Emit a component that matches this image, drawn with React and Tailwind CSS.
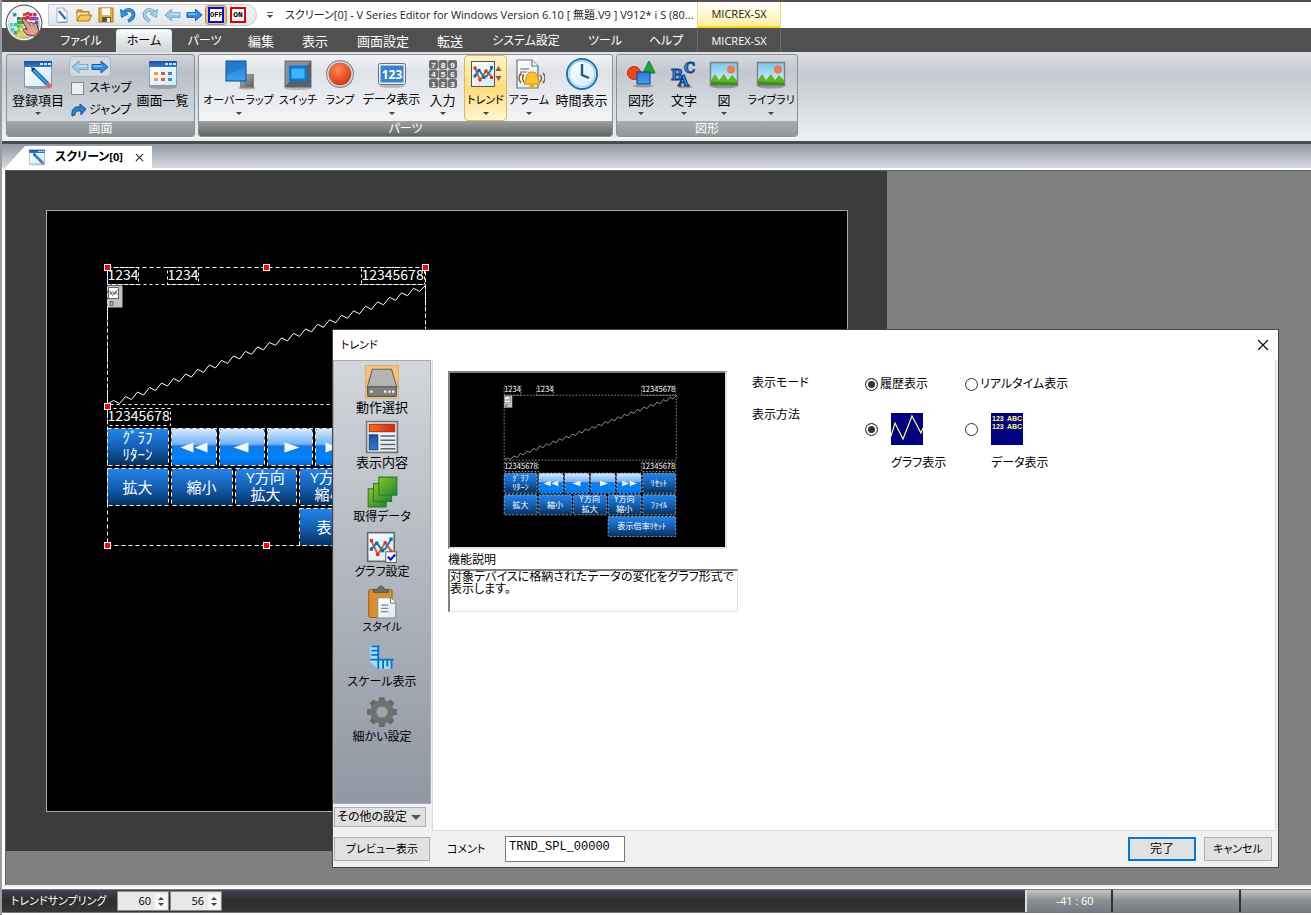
import React, { useState } from "react";

/* ---------- quick access icons ---------- */

const LogoIcon = () => (
  <svg viewBox="0 0 40 40" className="h-10 w-10">
    <defs>
      <radialGradient id="orb" cx="50%" cy="30%" r="75%">
        <stop offset="0" stopColor="#ffffff" />
        <stop offset="0.6" stopColor="#e8eaec" />
        <stop offset="1" stopColor="#9a9ea2" />
      </radialGradient>
    </defs>
    <circle cx="20" cy="20" r="18.5" fill="#5c5f63" />
    <circle cx="20" cy="20" r="17.3" fill="#fdfdfd" />
    <circle cx="20" cy="20" r="16" fill="url(#orb)" />
    {[
      [9, 10, "#2f98a8"], [13, 14, "#1c8c80"], [19, 10, "#e0503a"], [22, 9, "#d23c3c"], [25, 10, "#c83264"], [29, 10, "#a43c8c"],
      [16, 14, "#e87832"], [22, 13, "#c8325a"], [19, 14, "#d04030"], [28, 14, "#8c46be"], [31, 18, "#5a50c8"], [31, 14, "#a04cc0"], [25, 14, "#c83c80"],
      [6, 20, "#50d2dc"], [13, 18, "#28a84e"], [16, 18, "#50a03c"], [7, 25, "#48ccd4"], [13, 22, "#50c83c"], [16, 22, "#a0d232"],
      [10, 20, "#38c8a0"], [10, 28, "#46b432"], [13, 26, "#8cd228"], [13, 31, "#f0dc28"], [31, 22, "#6e46b4"], [18, 32, "#f0c828"], [16, 28, "#d8d828"],
    ].map(([x, y, c], i) => (
      <rect key={i} x={x} y={y} width="3.400" height="3.400" fill={c} />
    ))}
    <path d="M18 17c-.5-1.500 1.500-2.500 2.700-1.200l4 4.500c2-1.300 3.500-.9 4.500 0c2-.6 3.500.5 4 2.500c.8 2 .8 4 1.800 5.500l-4.500 5c-3-1.500-5.500-.5-8.500-2.500l-3-3.500c-.5-1.700 1.500-2.200 3-1l1.200.7z" fill="#d8a490" stroke="#5c2c24" strokeWidth="1" />
    <path d="M25 21l1.500 2.500M28.500 20.500l1.500 2.500" stroke="#8a4a3c" strokeWidth=".8" />
  </svg>
);

const Arrow = ({ left, faded, className }) => (
  <svg viewBox="0 0 18 14" className={className}>
    <path
      d="M10 1l7 6-7 6V9.500H1v-5h9z"
      transform={left ? "rotate(180 9 7)" : undefined}
      fill={faded ? "#9cc6e6" : "#2f8fe0"}
      stroke={faded ? "#6ea6d0" : "#0f5ca8"}
      strokeWidth="1"
    />
    <path d={left ? "M7 6h9" : "M2 6h9"} stroke={faded ? "#cfe6f6" : "#7cc4fa"} strokeWidth="1.500" />
  </svg>
);

const PageIcon = () => (
  <svg viewBox="0 0 16 16" className="h-4 w-4">
    <path d="M3 1h7l3 3v11H3z" fill="#f6fafd" stroke="#a8b0b8" />
    <path d="M10 1v3h3" fill="#d4e4f0" stroke="#a8b0b8" />
    <path d="M5 4l6.500 8" stroke="#1d6fc0" strokeWidth="2.200" />
    <path d="M3.500 15.500h10" stroke="#8f969c" />
  </svg>
);
const FolderIcon = () => (
  <svg viewBox="0 0 16 16" className="h-4 w-4">
    <path d="M1 3h5l1.500 1.500H13V7H1z" fill="#e8ac38" stroke="#a87818" />
    <path d="M1 14V5h12v3" fill="#fbe7a6" stroke="#b98a28" />
    <path d="M1 14l3-6h11.500l-2.500 6z" fill="#f7c858" stroke="#a87818" />
  </svg>
);
const SaveIcon = () => (
  <svg viewBox="0 0 16 16" className="h-4 w-4">
    <rect x="1" y="1" width="14" height="14" fill="#f0b028" stroke="#b07810" />
    <rect x="3.500" y="1" width="9" height="7.500" fill="#fafafa" stroke="#c8a050" strokeWidth=".6" />
    <rect x="4" y="10" width="9" height="5" fill="#555" />
    <rect x="9" y="11" width="3" height="4" fill="#eee" />
  </svg>
);
const TurnIcon = ({ redo }) => (
  <svg viewBox="0 0 16 16" className="h-4 w-4">
    <g transform={redo ? "translate(16 0) scale(-1 1)" : undefined}>
      <path d="M3.500 7C5 2.500 11 1.500 13 5.500c1.500 3.500-1 7.500-5 8.500" fill="none" stroke={redo ? "#6a9cc4" : "#1458a8"} strokeWidth="3.600" />
      <path d="M3.500 7C5 2.500 11 1.500 13 5.500c1.500 3.500-1 7.500-5 8.500" fill="none" stroke={redo ? "#a6d2ee" : "#3a96e8"} strokeWidth="2" />
      <path d="M.5 2.500l1 8 6.500-3.500z" fill={redo ? "#a6d2ee" : "#3a96e8"} stroke={redo ? "#6a9cc4" : "#1458a8"} strokeWidth=".8" />
    </g>
  </svg>
);

/* ---------- ribbon icons ---------- */

const Svg = ({ children, size = "h-8 w-8" }) => (
  <svg viewBox="0 0 32 32" className={size}>
    {children}
  </svg>
);

const Gradients = () => (
  <svg className="absolute h-0 w-0" aria-hidden="true">
    <defs>
      <linearGradient id="blue" x1="0" y1="0" x2="0" y2="1">
        <stop offset="0" stopColor="#2c7cd0" />
        <stop offset="1" stopColor="#3aa0f0" />
      </linearGradient>
      <linearGradient id="navy" x1="0" y1="0" x2="0" y2="1">
        <stop offset="0" stopColor="#1e50a0" />
        <stop offset="1" stopColor="#2f7cd0" />
      </linearGradient>
      <linearGradient id="steel" x1="0" y1="0" x2="1" y2="1">
        <stop offset="0" stopColor="#b8b8b8" />
        <stop offset="1" stopColor="#585858" />
      </linearGradient>
      <linearGradient id="sheet" x1="0" y1="0" x2="1" y2="1">
        <stop offset="0" stopColor="#ffffff" />
        <stop offset="1" stopColor="#d4e9f6" />
      </linearGradient>
      <linearGradient id="sky" x1="0" y1="0" x2="0" y2="1">
        <stop offset="0" stopColor="#78c4f0" />
        <stop offset="1" stopColor="#e8f6fe" />
      </linearGradient>
      <linearGradient id="green" x1="0" y1="0" x2="1" y2="1">
        <stop offset="0" stopColor="#88c428" />
        <stop offset="1" stopColor="#1c8434" />
      </linearGradient>
      <linearGradient id="orange" x1="0" y1="0" x2="1" y2="0">
        <stop offset="0" stopColor="#f07020" />
        <stop offset="1" stopColor="#d02810" />
      </linearGradient>
      <linearGradient id="btn" x1="0" y1="0" x2="0" y2="1">
        <stop offset="0" stopColor="#2484ec" />
        <stop offset="0.500" stopColor="#1460b4" />
        <stop offset="1" stopColor="#06305e" />
      </linearGradient>
      <linearGradient id="gloss" x1="0" y1="0" x2="0" y2="1">
        <stop offset="0" stopColor="#d8ecff" />
        <stop offset="0.420" stopColor="#74b4f6" />
        <stop offset="0.480" stopColor="#1478e4" />
        <stop offset="0.800" stopColor="#0082ff" />
        <stop offset="1" stopColor="#0468d0" />
      </linearGradient>
      <radialGradient id="red" cx="40%" cy="30%" r="70%">
        <stop offset="0" stopColor="#ff8858" />
        <stop offset="1" stopColor="#dc3810" />
      </radialGradient>
    </defs>
  </svg>
);

const WindowPencilIcon = ({ size }) => (
  <Svg size={size}>
    <ellipse cx="16" cy="29" rx="14" ry="2" fill="#00000033" />
    <rect x="2.500" y="3.500" width="27" height="25" fill="url(#sheet)" stroke="#7d9cc0" />
    <rect x="2" y="3" width="28" height="6" rx="1" fill="url(#navy)" />
    <path d="M18 5h3v2h-3zM22 5h3v2h-3zM26 5h3v2h-3z" fill="#c8e4ff" />
    <path d="M10.500 11l15 15" stroke="#174f96" strokeWidth="4.500" />
    <path d="M10.500 11l15 15" stroke="#2f9bf0" strokeWidth="2.500" />
    <path d="M25 25.500l3.500 3.500" stroke="#e06848" strokeWidth="4.500" />
    <path d="M9 9l4 1.500-2.500 2.500z" fill="#222" />
  </Svg>
);
const WindowListIcon = () => (
  <Svg>
    <ellipse cx="16" cy="29" rx="14" ry="2" fill="#00000033" />
    <rect x="2.500" y="3.500" width="27" height="24" fill="url(#sheet)" stroke="#7d9cc0" />
    <rect x="2" y="3" width="28" height="6" rx="1" fill="url(#navy)" />
    <path d="M18 5h3v2h-3zM22 5h3v2h-3zM26 5h3v2h-3z" fill="#c8e4ff" />
    <path d="M7 14h4v3H7zM7 20h4v3H7z" fill="#f0a030" />
    <path d="M14 14h4v3h-4zM14 20h4v3h-4z" fill="#e05840" />
    <path d="M21 14h4v3h-4zM21 20h4v3h-4z" fill="#4088d0" />
  </Svg>
);
const OverlapIcon = () => (
  <Svg>
    <ellipse cx="24" cy="30" rx="9" ry="1.500" fill="#00000044" />
    <rect x="17.500" y="16.500" width="13" height="13" fill="url(#steel)" stroke="#888" />
    <rect x="3" y="3" width="20" height="20" fill="url(#blue)" stroke="#0c4c94" />
    <path d="M4 18C6 14 14 15 22 9v-5H4z" fill="#1e74c8" opacity=".6" />
  </Svg>
);
const SwitchIcon = () => (
  <Svg>
    <ellipse cx="16" cy="30" rx="14" ry="2" fill="#00000033" />
    <rect x="3" y="3" width="26" height="26" fill="#8a8f94" stroke="#6a6e72" />
    <path d="M3 29L29 29L29 3L24 9V23H8z" fill="#5c6066" />
    <rect x="7" y="7.500" width="18" height="16" fill="#0878d8" />
    <rect x="9.500" y="10.500" width="13" height="10" fill="#40b4ff" />
  </Svg>
);
const LampIcon = () => (
  <Svg>
    <circle cx="16" cy="16" r="14" fill="#8a8a8a" />
    <circle cx="16" cy="16" r="12.800" fill="#e4e4e4" />
    <circle cx="16" cy="16" r="11.500" fill="#888" />
    <circle cx="16" cy="16" r="11" fill="url(#red)" />
  </Svg>
);
const NumberIcon = () => (
  <Svg>
    <ellipse cx="16" cy="28" rx="13" ry="2" fill="#00000033" />
    <rect x="2.500" y="5.500" width="27" height="21" rx="2" fill="#f0f2f4" stroke="#6c7278" />
    <rect x="4.500" y="7.500" width="23" height="17" fill="#3484d0" />
    <text x="16" y="20.500" textAnchor="middle" className="fill-white font-['Noto_Sans',sans-serif] text-[12px] font-bold">123</text>
  </Svg>
);
const KeypadIcon = () => (
  <Svg>
    {["7", "8", "9", "4", "5", "6", "1", "2", "3"].map((n, i) => (
      <g key={n}>
        <rect x={2 + (i % 3) * 9.500} y={2 + Math.floor(i / 3) * 9.500} width="9" height="9" rx="2" fill="#6c6c6c" />
        <text x={6.500 + (i % 3) * 9.500} y={9.500 + Math.floor(i / 3) * 9.500} textAnchor="middle" className="fill-white font-['Liberation_Sans',sans-serif] text-[8px] font-bold">{n}</text>
      </g>
    ))}
  </Svg>
);
const Chart = () => (
  <>
    <rect x="2.500" y="2.500" width="25" height="27" fill="url(#sheet)" stroke="#666" strokeWidth="1.500" />
    <path d="M6 10l6 13 7-11 6 8" fill="none" stroke="#f06020" strokeWidth="2" />
    <path d="M6 18l5-6 5 7 3-1 6-10" fill="none" stroke="#1480c8" strokeWidth="2" />
    <path d="M4.500 8.500h3v3h-3zM10.500 21.500h3v3h-3zM17.500 10.500h3v3h-3zM23 19h3v3h-3z" fill="#e02c18" />
    <path d="M4.500 16.500h3v3h-3zM9.500 11h3v3h-3zM15 18h3v3h-3zM23 7h3v3h-3z" fill="#0c68b0" />
  </>
);
const TrendIcon = () => (
  <svg viewBox="0 0 36 32" className="h-8 w-9">
    <rect x="3.500" y="3.500" width="23" height="25" fill="url(#sheet)" stroke="#555" />
    <path d="M7 10l5 12 6-9 6 6" fill="none" stroke="#f06020" strokeWidth="2" />
    <path d="M7 18l4-6 5 7 3-1 5-8" fill="none" stroke="#1480c8" strokeWidth="2" />
    <path d="M5.500 8.500h3v3h-3zM10.500 20.500h3v3h-3zM16.500 11.500h3v3h-3zM22 18h3v3h-3z" fill="#e02c18" />
    <path d="M5.500 16.500h3v3h-3zM9.500 11h3v3h-3zM14.500 18h3v3h-3zM22 8h3v3h-3z" fill="#0c68b0" />
    <path d="M27.500 13l3-5 3 5zM27.500 18l3 5 3-5z" fill="#666" />
  </svg>
);
const AlarmIcon = () => (
  <Svg>
    <path d="M4 2h15l6 6v22H4z" fill="url(#sheet)" stroke="#6c7278" strokeWidth="1.200" />
    <path d="M19 2v6h6" fill="#fff" stroke="#6c7278" strokeWidth="1.200" />
    <path d="M7 11h9M7 14h7M7 17h4" stroke="#666" strokeWidth="1.200" />
    <path d="M19 14c-5 0-6 4-6 8l-2 4h16l-2-4c0-4-1-8-6-8z" fill="#ffc428" stroke="#c88410" />
    <circle cx="19" cy="28.500" r="2.500" fill="#f0a818" />
    <path d="M11 17q-3 3 0 7M8 15q-4 5 0 10M27 17q3 3 0 7M30 15q4 5 0 10" fill="none" stroke="#8a6020" strokeWidth="1.400" />
  </Svg>
);
const ClockIcon = () => (
  <Svg>
    <circle cx="16" cy="16" r="15" fill="#fff" stroke="#1c74b8" strokeWidth="2" />
    <circle cx="16" cy="16" r="13" fill="url(#sheet)" stroke="#9cd4f4" strokeWidth="1.500" />
    <path d="M16 6v11l7 3" fill="none" stroke="#2c5878" strokeWidth="2.400" />
  </Svg>
);
const ShapesIcon = () => (
  <Svg>
    <ellipse cx="18" cy="28" rx="10" ry="1.500" fill="#00000044" />
    <circle cx="9" cy="15" r="6.500" fill="#ee4818" stroke="#b42c08" />
    <path d="M24 3l6 12H18z" fill="#18a838" stroke="#0c8024" />
    <rect x="12" y="14" width="13" height="12" fill="url(#blue)" stroke="#0c3c94" />
  </Svg>
);
const LettersIcon = () => (
  <Svg>
    <ellipse cx="17" cy="29" rx="7" ry="1.500" fill="#00000044" />
    <g className="fill-[#2c8ce4] stroke-[#0c4080] font-['DejaVu_Serif',serif] text-[14px] font-bold" strokeWidth="1">
      <text x="3" y="22">B</text>
      <text x="16" y="15">C</text>
      <text x="10" y="28">A</text>
    </g>
  </Svg>
);
const PictureIcon = () => (
  <Svg>
    <ellipse cx="16" cy="28.500" rx="13" ry="2" fill="#00000044" />
    <rect x="2.500" y="4.500" width="27" height="23" fill="url(#sky)" stroke="#7c8288" strokeWidth="1.500" />
    <circle cx="23" cy="11.500" r="4" fill="#f07850" />
    <path d="M3 25v-3l4-6 4 6 5-6 4 6 4-5 5 5v4z" fill="#64b428" />
    <path d="M3 27v-3.500l26 1V27z" fill="#3c9020" />
  </Svg>
);

/* ---------- ribbon ---------- */

const Caret = () => <span className="h-0 w-0 border-x-[3px] border-t-[3px] border-x-transparent border-t-[#444]" />;

const textSize = { s: "text-[11px]", m: "text-[12px]", l: "text-[13px]" };

const RibbonButton = ({ icon, label, w, drop, size = "l", active }) => (
  <button
    type="button"
    className={`flex h-[66px] shrink-0 flex-col items-center pt-[2px] ${w} ${
      active ? "rounded-sm border border-[#d8b860] bg-linear-to-b from-[#fff3c4] via-[#ffdc78] to-[#fff6d4]" : "border border-transparent"
    }`}
  >
    {icon}
    <span className={`mt-[2px] leading-4 whitespace-nowrap text-black ${textSize[size]}`}>{label}</span>
    <span className="mt-[4px] flex h-[3px]">{drop && <Caret />}</span>
  </button>
);

const RibbonGroup = ({ title, tone, foot, children }) => (
  <section className={`flex flex-col overflow-hidden rounded-[3px] border border-[#8b9096] shadow-[0_1px_0_#fff] ${tone}`}>
    <div className="flex flex-1 items-start">{children}</div>
    <h2 className={`h-4 text-center text-[12px] leading-4 text-white ${foot}`}>{title}</h2>
  </section>
);

const menu = [
  ["ファイル", "w-[70px]", "m"], ["ホーム", "w-[56px]", "m"], ["パーツ", "w-[65px]", "m"], ["編集", "w-[48px]", "l"], ["表示", "w-[60px]", "l"],
  ["画面設定", "w-[76px]", "l"], ["転送", "w-[58px]", "l"], ["システム設定", "w-[94px]", "m"], ["ツール", "w-[64px]", "m"], ["ヘルプ", "w-[58px]", "m"],
];

const Header = () => (
  <header className="relative">
    <div className="flex h-7 items-stretch border-t-2 border-[#55504f] bg-white">
      <div className="ml-[46px] mt-[2px] flex h-[22px] w-[209px] shrink-0 items-center rounded-r-full border border-[#c8ccd0] bg-linear-to-b from-[#f4f5f6] to-[#e2e5e8] pl-[2px]">
        {[
          ["新規", <PageIcon />], ["開く", <FolderIcon />], ["保存", <SaveIcon />], ["元に戻す", <TurnIcon />], ["やり直し", <TurnIcon redo />],
          ["前へ", <Arrow left faded className="h-[14px] w-[17px]" />], ["次へ", <Arrow className="h-[14px] w-[17px]" />],
        ].map(([name, icon]) => (
          <button key={name} type="button" aria-label={name} className="flex w-[22px] justify-center">{icon}</button>
        ))}
        <button type="button" className="flex h-[20px] w-[22px] items-center justify-center rounded-sm border border-[#a89068] bg-[#f2bf78]">
          <span className="w-4 border-2 border-[#0010d0] bg-white text-center font-['Liberation_Mono',monospace] text-[7px] leading-[12px] font-bold text-black">OFF</span>
        </button>
        <button type="button" className="flex h-[20px] w-[22px] items-center justify-center">
          <span className="w-4 border-2 border-[#e00000] bg-white text-center font-['Liberation_Mono',monospace] text-[8px] leading-[12px] font-bold text-black">ON</span>
        </button>
      </div>
      <button type="button" aria-label="カスタマイズ" className="flex w-[26px] shrink-0 flex-col items-center justify-center gap-[2px]">
        <span className="h-px w-[6px] bg-[#555]" />
        <Caret />
      </button>
      <h1 className="w-[412px] shrink-0 pl-[2px] text-[11px] leading-[25px] whitespace-nowrap text-[#222]">
        スクリーン[0] - V Series Editor for Windows Version 6.10 [ 無題.V9 ] V912* i S (80...
      </h1>
      <div className="ml-[2px] w-[84px] border-x border-b-2 border-[#e8d890] border-b-[#f8d820] bg-linear-to-b from-white via-[#fff8d4] to-[#ffee98] text-center text-[11px] leading-6 text-[#222]">MICREX-SX</div>
    </div>
    <nav className="flex h-6 items-end bg-[#505050] pl-[44px] text-white">
      {menu.map(([name, w, size]) => (
        <button
          key={name}
          type="button"
          className={`${w} ${textSize[size]} whitespace-nowrap leading-[22px] ${
            name === "ホーム" ? "rounded-t-[3px] border border-b-0 border-[#c8f0f0] bg-linear-to-b from-[#fafafa] to-[#ced2d8] text-black" : ""
          }`}
        >
          {name}
        </button>
      ))}
      <button type="button" className="ml-[2px] w-[84px] border-x border-[#6a6e74] text-[11px] leading-[23px]">MICREX-SX</button>
    </nav>
    <button type="button" aria-label="メインメニュー" className="absolute left-[2px] top-[3px]">
      <LogoIcon />
    </button>

    <div className="flex h-[89px] items-stretch gap-[3px] border-b border-[#eef2f2] bg-linear-to-b from-[#dfe1e5] via-[#c6cad1] via-25% to-[#ebf1f1] px-[4px] pt-[2px] pb-[3px]">
      <RibbonGroup title="画面" tone="bg-linear-to-b from-[#d2d5da] via-[#b9bec7] via-20% to-[#dde3e5]" foot="bg-linear-to-b from-[#a2a7ab] to-[#8a8e90]">
        <RibbonButton w="w-[62px]" icon={<WindowPencilIcon />} label="登録項目" drop />
        <div className="flex w-[62px] flex-col pt-[1px]">
          <div className="flex h-[21px] w-[42px] items-center justify-around rounded-sm border border-[#b0b5ba] bg-[#d4d9dd]">
            <button type="button" aria-label="前の画面"><Arrow left faded className="h-[14px] w-[18px]" /></button>
            <button type="button" aria-label="次の画面"><Arrow className="h-[14px] w-[18px]" /></button>
          </div>
          <label className="flex h-[22px] items-center gap-[5px] whitespace-nowrap pl-[2px] text-[12px]">
            <input type="checkbox" className="h-[13px] w-[13px] shrink-0 appearance-none border border-[#888] bg-[#eceef0]" />
            スキップ
          </label>
          <button type="button" className="flex h-[21px] items-center gap-[2px] whitespace-nowrap pl-[2px] text-[12px]">
            <svg viewBox="0 0 16 14" className="h-[14px] w-4 shrink-0">
              <path d="M1 13C0 6 4 3 9 4V1l6 5-5 6V8.500C6 7 4 9 4 12z" fill="#2c80d0" stroke="#125098" />
            </svg>
            ジャンプ
          </button>
        </div>
        <RibbonButton w="w-[63px]" icon={<WindowListIcon />} label="画面一覧" />
      </RibbonGroup>
      <RibbonGroup title="パーツ" tone="bg-linear-to-b from-[#f4f5f7] via-[#dfe2e8] via-20% to-[#f8f9fa]" foot="bg-linear-to-b from-[#a0a2a2] to-[#5e605f]">
        <RibbonButton w="w-[79px]" icon={<OverlapIcon />} label="オーバーラップ" drop size="s" />
        <RibbonButton w="w-[40px]" icon={<SwitchIcon />} label="スイッチ" size="s" />
        <RibbonButton w="w-[44px]" icon={<LampIcon />} label="ランプ" size="s" />
        <RibbonButton w="w-[59px]" icon={<NumberIcon />} label="データ表示" drop size="m" />
        <RibbonButton w="w-[43px]" icon={<KeypadIcon />} label="入力" drop />
        <RibbonButton w="w-[43px]" icon={<TrendIcon />} label="トレンド" drop size="s" active />
        <RibbonButton w="w-[44px]" icon={<AlarmIcon />} label="アラーム" drop size="s" />
        <RibbonButton w="w-[61px]" icon={<ClockIcon />} label="時間表示" />
      </RibbonGroup>
      <RibbonGroup title="図形" tone="bg-linear-to-b from-[#d6d9dd] via-[#c3c8cf] via-20% to-[#e4eaea]" foot="bg-linear-to-b from-[#a8acae] to-[#929698]">
        <RibbonButton w="w-[48px]" icon={<ShapesIcon />} label="図形" drop />
        <RibbonButton w="w-[38px]" icon={<LettersIcon />} label="文字" drop />
        <RibbonButton w="w-[42px]" icon={<PictureIcon />} label="図" drop />
        <RibbonButton w="w-[52px]" icon={<PictureIcon />} label="ライブラリ" drop size="s" />
      </RibbonGroup>
    </div>
  </header>
);

/* ---------- trend part drawing ---------- */

const zigzag = (() => {
  const pts = ["1,136", "6,133", "12,136"];
  for (let x = 12; x < 312; x += 12) {
    const base = 136 - ((x - 12) * 115) / 306;
    pts.push(`${x + 6},${(base - 7).toFixed(1)}`, `${x + 12},${(base - 4).toFixed(1)}`);
  }
  pts.push("318,18");
  return pts.join(" ");
})();

const Key = ({ x, y, w, lines }) => (
  <g>
    <rect x={x} y={y} width={w - 1} height="37" rx="3" fill="url(#btn)" />
    <rect x={x} y={y} width={w - 1} height="37" fill="none" stroke="#fff" strokeDasharray="4 3" />
    {lines.map((t, i) => (
      <text key={t} x={x + w / 2 - 1} y={y + (lines.length === 1 ? 24 : 14 + i * 17)} textAnchor="middle" className="fill-white text-[15px]">{t}</text>
    ))}
  </g>
);

const ArrowKey = ({ x, d }) => (
  <g>
    <rect x={x} y="161" width="45" height="37" rx="4" fill="url(#gloss)" />
    <rect x={x} y="161" width="45" height="37" fill="none" stroke="#fff" strokeDasharray="4 3" />
    <path d={d} transform={`translate(${x} 161)`} fill="#f4f6fa" />
  </g>
);

const Digits = ({ x, y, w, children }) => (
  <g>
    <rect x={x} y={y} width={w - 1} height="17" fill="none" stroke="#fff" strokeDasharray="3 3" />
    <text x={x} y={y + 12} className="fill-white font-['Noto_Sans_CJK_JP',sans-serif] text-[14px]">{children}</text>
  </g>
);

const TrendDrawing = ({ className, selected }) => (
  <svg viewBox="-5 -5 330 290" className={className} role="img" aria-label="トレンド">
    <g transform="translate(.5 .5)">
      {selected && <rect x="0" y="0" width="318" height="278" fill="none" stroke="#fff" strokeDasharray="4 3" />}
      <Digits x={0} y={0} w={32}>1234</Digits>
      <Digits x={60} y={0} w={32}>1234</Digits>
      <Digits x={254} y={0} w={64}>12345678</Digits>
      <rect x="0" y="17" width="318" height="120" fill="none" stroke="#fff" strokeDasharray="3 3" />
      <polyline points={zigzag} fill="none" stroke="#fff" />
      <rect x="0" y="18" width="15" height="22" fill="#c0c0c0" />
      <rect x="1" y="20" width="10" height="11" fill="#fff" stroke="#666" />
      <path d="M2 23l3 5 3-4 2 3" fill="none" stroke="#e04020" />
      <path d="M2 27l3-3 2 3 3-5" fill="none" stroke="#1870c0" />
      <text x="2" y="38" className="fill-black text-[7px]">0</text>
      <Digits x={0} y={141} w={64}>12345678</Digits>
      <Key x={0} y={161} w={62} lines={["ｸﾞﾗﾌ", "ﾘﾀｰﾝ"]} />
      <ArrowKey x={64} d="M9 19l13-5v10zM23 19l13-5v10z" />
      <ArrowKey x={112} d="M14 19l15-5v10z" />
      <ArrowKey x={160} d="M32 19l-15-5v10z" />
      <ArrowKey x={208} d="M23 19l-13-5v10zM37 19l-13-5v10z" />
      <Key x={0} y={201} w={62} lines={["拡大"]} />
      <Key x={64} y={201} w={62} lines={["縮小"]} />
      <Key x={128} y={201} w={62} lines={["Y方向", "拡大"]} />
      <Key x={192} y={201} w={62} lines={["Y方向", "縮小"]} />
      <Key x={192} y={241} w={126} lines={["表示倍率ﾘｾｯﾄ"]} />
      {!selected && (
        <>
          <Digits x={254} y={141} w={64}>12345678</Digits>
          <Key x={256} y={161} w={62} lines={["ﾘｾｯﾄ"]} />
          <Key x={256} y={201} w={62} lines={["ﾌｧｲﾙ"]} />
        </>
      )}
      {selected &&
        [[0, 0], [159, 0], [318, 0], [0, 139], [318, 139], [0, 278], [159, 278], [318, 278]].map(([x, y]) => (
          <rect key={`${x}-${y}`} x={x - 3} y={y - 3} width="6" height="6" fill="#ff0000" stroke="#fff" />
        ))}
    </g>
  </svg>
);

/* ---------- dialog ---------- */

const side = [
  ["動作選択", "l", (
    <Svg size="h-[34px] w-[34px]">
      <rect x=".5" y=".5" width="31" height="31" fill="#fbc070" stroke="#c8b48c" />
      <path d="M7 4h18l5 17H2z" fill="#b4b4b4" stroke="#666" />
      <rect x="2.500" y="20.500" width="27" height="9" rx="1" fill="#808080" stroke="#555" />
      <path d="M5 24h2v2H5zM18 24h2v2h-2zM22 24h2v2h-2zM25.500 24h2v2h-2z" fill="#fff" />
    </Svg>
  )],
  ["表示内容", "l", (
    <Svg size="h-[34px] w-[34px]">
      <rect x="1.500" y="1.500" width="29" height="29" fill="url(#sheet)" stroke="#6c7278" strokeWidth="1.500" />
      <rect x="4" y="4" width="24" height="7" fill="url(#orange)" stroke="#a83010" />
      <rect x="4" y="14" width="8" height="14" fill="url(#navy)" stroke="#124080" />
      <path d="M14.500 15h14M14.500 19h14M14.500 23h14M14.500 27h14" stroke="#666" strokeWidth="1.300" />
    </Svg>
  )],
  ["取得データ", "m", (
    <Svg size="h-[34px] w-[34px]">
      <path d="M3 13h17v17H3z" fill="url(#green)" stroke="#2c7c28" />
      <path d="M8 8h17v17H8z" fill="url(#green)" stroke="#2c7c28" />
      <path d="M13 2h17v17H13z" fill="url(#green)" stroke="#2c7c28" />
    </Svg>
  )],
  ["グラフ設定", "m", (
    <Svg size="h-[34px] w-[34px]">
      <Chart />
      <rect x="19.500" y="20.500" width="10" height="10" fill="#fff" stroke="#666" />
      <path d="M21.500 25l2.500 3 4.500-5" fill="none" stroke="#0010d8" strokeWidth="2" />
    </Svg>
  )],
  ["スタイル", "s", (
    <Svg size="h-[34px] w-[34px]">
      <rect x="3.500" y="4.500" width="22" height="26" rx="1.500" fill="#d89030" stroke="#9c6010" />
      <path d="M8 7V4h4c0-4 6-4 6 0h4v3z" fill="#6c6c6c" stroke="#444" strokeWidth=".6" />
      <path d="M12 12h12l5 5v14H12z" fill="url(#sheet)" stroke="#888" />
      <path d="M24 12v5h5" fill="#fff" stroke="#777" />
      <path d="M15 19h7M15 22h7M15 25h7" stroke="#888" strokeWidth="1.200" />
    </Svg>
  )],
  ["スケール表示", "m", (
    <Svg size="h-[34px] w-[34px]">
      <path d="M5 5h8v13h13v9H12l-7-6z" fill="#a4dcfc" />
      <path d="M12.500 5v22M5 18.500h22M6 6h6M6 10h6M6 14h6M17 19v8M21 19v6M25 19v8" stroke="#0074c8" strokeWidth="1.800" />
    </Svg>
  )],
  ["細かい設定", "m", (
    <Svg size="h-[34px] w-[34px]">
      <g fill="#686868">
        {[0, 45, 90, 135, 180, 225, 270, 315].map((a) => (
          <path key={a} d="M13.500 2h5l1 6h-7z" transform={`rotate(${a} 16 16)`} />
        ))}
      </g>
      <circle cx="16" cy="16" r="8" fill="none" stroke="#707070" strokeWidth="6" />
      <circle cx="16" cy="16" r="5" fill="none" stroke="#989898" />
    </Svg>
  )],
];

const Radio = ({ name, value, current, onPick }) => (
  <input
    type="radio"
    name={name}
    checked={current === value}
    onChange={() => onPick(value)}
    className="h-[13px] w-[13px] shrink-0 appearance-none rounded-full border border-[#333] bg-white checked:bg-[#333] checked:shadow-[inset_0_0_0_2px_#fff]"
  />
);

const push = "h-6 border border-[#adadad] bg-[#e1e1e1] text-center text-[11px] leading-5 text-black whitespace-nowrap";

const Dialog = () => {
  const [mode, setMode] = useState("history");
  const [method, setMethod] = useState("graph");
  return (
    <div role="dialog" aria-labelledby="dlg" className="absolute left-[326px] top-[158px] flex w-[947px] flex-col border border-[#444] bg-[#f0f0f0] text-[12px] text-black">
      <div className="flex h-[30px] items-center justify-between bg-white pl-2 pr-[9px]">
        <h2 id="dlg" className="text-[11px]">トレンド</h2>
        <button type="button" aria-label="閉じる">
          <svg viewBox="0 0 12 12" className="h-3 w-3"><path d="M1 1l10 10M11 1L1 11" stroke="#111" strokeWidth="1.200" /></svg>
        </button>
      </div>
      <div className="flex h-[471px]">
        <div className="flex w-[99px] shrink-0 flex-col">
          <nav className="flex h-[444px] w-[98px] flex-col border border-[#a8acb0] bg-linear-to-b from-[#d3d6db] to-[#8f97a2] pt-[4px]">
            {side.map(([name, size, icon]) => (
              <button key={name} type="button" className="flex h-[55px] flex-col items-center whitespace-nowrap">
                {icon}
                <span className={`leading-4 ${textSize[size]}`}>{name}</span>
              </button>
            ))}
          </nav>
          <div className="relative ml-px mt-[3px] w-[92px]">
            <select aria-label="その他の設定" className="h-5 w-full appearance-none border border-[#adadad] bg-[#e1e1e1] pl-[2px] text-[12px] leading-4">
              <option>その他の設定</option>
            </select>
            <span className="pointer-events-none absolute right-[5px] top-[8px] h-0 w-0 border-x-[5px] border-t-[5px] border-x-transparent border-t-[#555]" />
          </div>
        </div>
        <div className="mr-[2px] flex flex-1 items-start border border-t-0 border-[#dcdcdc] bg-white pl-[15px] pt-[11px]">
          <div className="w-[284px] shrink-0">
            <div className="flex h-[178px] w-[279px] justify-center border-2 border-[#808080] border-r-[#e3e3e3] border-b-[#e3e3e3] bg-black pl-[6px] pt-[10px]">
              <TrendDrawing className="h-[157px] w-[179px]" />
            </div>
            <label htmlFor="help" className="mt-[3px] block leading-4">機能説明</label>
            <textarea
              id="help"
              readOnly
              className="mt-px block h-[43px] w-[290px] resize-none overflow-hidden border border-t-2 border-l-2 border-[#808080] border-r-[#e3e3e3] border-b-[#e3e3e3] bg-white text-[12px] leading-3"
              defaultValue="対象デバイスに格納されたデータの変化をグラフ形式で表示します。"
            />
          </div>
          <div className="ml-5 grid grid-cols-[113px_100px_auto] leading-4">
            <span className="pt-[4px]">表示モード</span>
            <label className="flex h-[26px] items-center gap-[2px] whitespace-nowrap">
              <Radio name="mode" value="history" current={mode} onPick={setMode} />
              履歴表示
            </label>
            <label className="flex h-[26px] items-center gap-[2px] whitespace-nowrap">
              <Radio name="mode" value="live" current={mode} onPick={setMode} />
              リアルタイム表示
            </label>
            <span className="pt-[10px]">表示方法</span>
            <label className="mt-4 grid grid-cols-[26px_auto] items-center gap-y-[10px] whitespace-nowrap">
              <Radio name="method" value="graph" current={method} onPick={setMethod} />
              <svg viewBox="0 0 32 32" className="h-8 w-8 bg-[#000080]">
                <path d="M0 23L4 10L12 26L21 3L30 20L32 15" fill="none" stroke="#ffff80" strokeWidth="1.200" />
              </svg>
              <span className="col-start-2">グラフ表示</span>
            </label>
            <label className="mt-4 grid grid-cols-[26px_auto] items-center gap-y-[10px] whitespace-nowrap">
              <Radio name="method" value="data" current={method} onPick={setMethod} />
              <svg viewBox="0 0 32 32" className="h-8 w-8 bg-[#000080]">
                <g className="fill-[#ffff80] font-['Liberation_Sans',sans-serif] text-[7px] font-bold">
                  <text x="1" y="8">123</text>
                  <text x="16" y="8">ABC</text>
                  <text x="1" y="16">123</text>
                  <text x="16" y="16">ABC</text>
                </g>
              </svg>
              <span className="col-start-2">データ表示</span>
            </label>
          </div>
        </div>
      </div>
      <div className="flex h-[36px] items-center pl-px pr-[6px]">
        <button type="button" className={`w-24 ${push}`}>プレビュー表示</button>
        <label htmlFor="comment" className="ml-[17px] w-[58px] text-[11px]">コメント</label>
        <input id="comment" defaultValue="TRND_SPL_00000" className="h-[26px] w-[120px] border border-[#7a7a7a] bg-white pb-1 pl-[3px] font-['Liberation_Mono',monospace] text-[12px]" />
        <button type="button" className="ml-auto h-6 w-[68px] border-2 border-[#0078d7] bg-[#e1e1e1] text-center text-[12px] leading-5">完了</button>
        <button type="button" className={`ml-2 w-[68px] ${push}`}>キャンセル</button>
      </div>
    </div>
  );
};

/* ---------- status bar ---------- */

const Spinner = ({ label, start }) => {
  const [n, setN] = useState(start);
  return (
    <div className="flex h-5 w-[52px] items-center border border-[#888] bg-[#e8e8e8] pr-px">
      <input aria-label={label} value={n} onChange={(e) => setN(Number(e.target.value) || 0)} className="w-[33px] bg-transparent text-right text-[11px] text-black" />
      <div className="ml-auto flex flex-col gap-[3px] bg-[#f6f6f6] px-[3px] py-[3px]">
        <button type="button" aria-label={`${label} +`} onClick={() => setN(n + 1)} className="h-0 w-0 border-x-[3px] border-b-[3px] border-x-transparent border-b-[#444]" />
        <button type="button" aria-label={`${label} -`} onClick={() => setN(n - 1)} className="h-0 w-0 border-x-[3px] border-t-[3px] border-x-transparent border-t-[#444]" />
      </div>
    </div>
  );
};

export default function App() {
  return (
    <div className="flex min-h-screen flex-col overflow-hidden border-l-2 border-[#9a9ea2] bg-white font-['Open_Sans','Noto_Sans_CJK_JP',sans-serif] [font-feature-settings:'palt']">
      <Gradients />
      <Header />
      <div className="flex h-[27px] items-end border-t-[3px] border-[#484c4c] bg-linear-to-b from-[#9299a4] to-[#d8dce1] pl-[3px]">
        <div className="flex h-[22px] w-[147px] items-center bg-white pl-[23px] [clip-path:polygon(20px_0,100%_0,100%_100%,0_100%)]">
          <WindowPencilIcon size="h-[18px] w-[18px]" />
          <span className="ml-[9px] text-[12px] font-bold whitespace-nowrap text-black">
            スクリーン<span className="text-[11px]">[0]</span>
          </span>
          <button type="button" aria-label="タブを閉じる" className="ml-auto mr-2">
            <svg viewBox="0 0 10 10" className="h-[9px] w-[9px]"><path d="M1 1l8 8M9 1L1 9" stroke="#333" strokeWidth="1.300" /></svg>
          </button>
        </div>
      </div>
      <main className="flex flex-1 border-y-2 border-t-white border-b-[#eee] bg-white pl-[3px]">
        <div className="relative flex-1 border-l border-t border-[#606060] bg-[#808080]">
          <div className="h-[680px] w-[881px] bg-[#3c3c3c] pl-10 pt-[39px]">
            <div className="relative h-[602px] w-[802px] border border-[#a8a8a8] bg-black">
              <div className="absolute left-[55px] top-[51px]">
                <TrendDrawing className="h-[290px] w-[330px]" selected />
              </div>
            </div>
          </div>
          <Dialog />
        </div>
      </main>
      <footer className="mt-[2px] mb-[2px] flex h-6 items-stretch border-y border-[#777] bg-linear-to-b from-[#404554] via-[#2e2e2e] via-45% to-[#363636] text-white">
        <span className="w-[115px] pl-[9px] text-[11px] leading-[22px] whitespace-nowrap">トレンドサンプリング</span>
        <div className="flex items-center gap-px">
          <Spinner label="X" start={60} />
          <Spinner label="Y" start={56} />
        </div>
        <div className="ml-auto flex w-[286px] border-l-2 border-[#ddd] bg-linear-to-b from-[#c4c6c6] via-[#8d9193] via-45% to-[#737b84] text-[11px] leading-[22px]">
          <span className="w-[86px] border-r-2 border-[#333] pl-3 text-center">-41 : 60</span>
          <span className="w-[128px] border-r-2 border-[#333]" />
          <span />
        </div>
      </footer>
    </div>
  );
}
